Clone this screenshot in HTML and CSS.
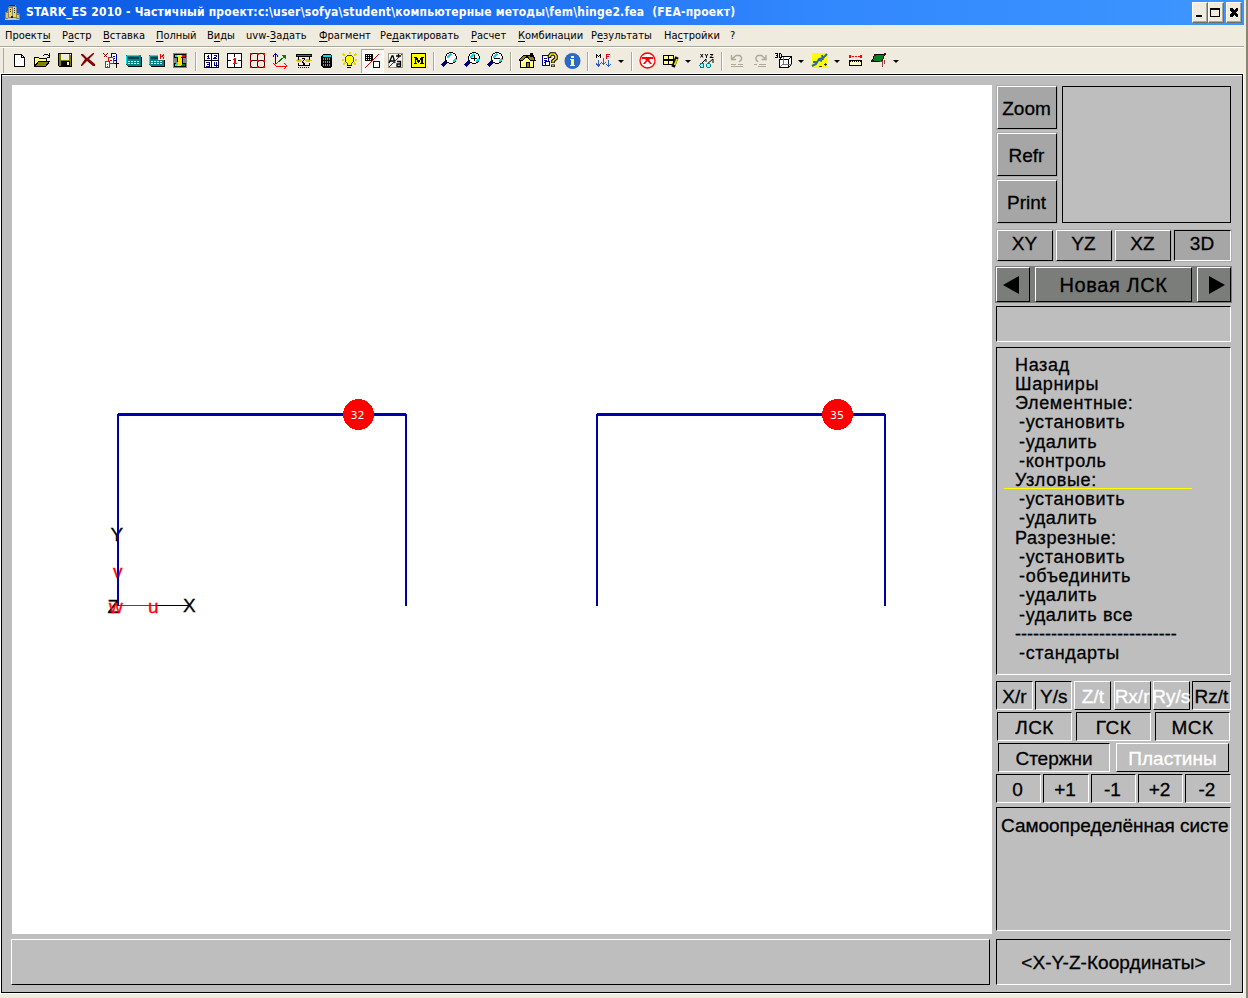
FILE: index.html
```html
<!DOCTYPE html>
<html lang="ru">
<head>
<meta charset="utf-8">
<title>STARK_ES 2010</title>
<link rel="stylesheet" href="styles.css">
</head>
<body>
<div class="window">
  <header class="titlebar">
    <svg class="app-icon" viewBox="0 0 17 17"><path d="M4 3h1V1h7v2h1v6l3 1v6H1V8l3-1z" fill="#84827c"/><path d="M5 4h3v9H5zM9 3h3v10H9z" fill="#f0dc40"/><path d="M5 1h6v1H5zM10 4h1v1h-1zM10 6h1v1h-1zM10 8h1v1h-1zM6 5h1v1H6zM6 7h1v1H6zM7 12h2v2H7z" fill="#222"/><path d="M2 9h2v5H2zM13 11h2v3h-2z" fill="#d8c850"/><path d="M1 15h14v1H1zM4 14h8v1H4z" fill="#c8c8c0"/></svg>
    <span class="title">STARK_ES 2010 - Частичный проект:c:\user\sofya\student\компьютерные методы\fem\hinge2.fea&nbsp; (FEA-проект)</span>
    <div class="controls">
      <span class="control"><svg viewBox="0 0 14 18"><path d="M3 12h6v2H3z"/></svg></span>
      <span class="control"><svg viewBox="0 0 14 18"><path d="M1 5h10v9H1zM2 7v6h8V7z" fill-rule="evenodd"/></svg></span>
      <span class="control close"><svg viewBox="0 0 14 18"><path d="M3 5h2l2 2 2-2h2v2L9 9.500l2 2V14H9l-2-2-2 2H3v-2.500l2-2L3 7z"/></svg></span>
    </div>
  </header>
  <nav class="menu">
    <span>Проект<u>ы</u></span><span>Р<u>а</u>стр</span><span><u>В</u>ставка</span><span><u>П</u>олный</span><span>В<u>и</u>ды</span><span>uvw-<u>З</u>адать</span><span><u>Ф</u>рагмент</span><span>Ре<u>д</u>актировать</span><span><u>Р</u>асчет</span><span><u>К</u>омбинации</span><span>Р<u>е</u>зультаты</span><span>На<u>с</u>тройки</span><span>?</span>
  </nav>
  <div class="toolbar">
    <svg class="tool" viewBox="0 0 23 24"><path d="M6.500 5.500h7l3 3v9h-10z" fill="#fff" stroke="#000"/><path d="M13.500 5.500v3h3" fill="none" stroke="#000"/></svg>
    <svg class="tool" viewBox="0 0 23 24"><path d="M3.500 17.500v-9h4l1 1h7v3" fill="#ffff80" stroke="#000"/><path d="M3.500 17.500l4-5h11l-4 5z" fill="#848400" stroke="#000"/><path d="M12 7l2-2h2l2 2M18.500 4v4h-3" fill="none" stroke="#000"/></svg>
    <svg class="tool" viewBox="0 0 23 24"><path d="M4.500 4.500h13v13h-12l-1-1z" fill="#7b7d00" stroke="#000"/><path d="M7 5h8v6H7z" fill="#efebde"/><path d="M7 12h9v5H7z"/><path d="M13 13h2v3h-2zM16 5h1v1h-1z" fill="#efebde"/></svg>
    <svg class="tool smooth" viewBox="0 0 23 24"><path d="M4 5h2l4 4 6-5h1v1l-5 5 6 5v2h-2l-6-5-5 5H4v-1l4-6-4-4z" fill="#840000"/></svg>
    <svg class="tool" viewBox="0 0 23 24"><path d="M3.500 4.500l4 4m0-4l-4 4" stroke="#840000"/><path d="M11.500 4.500h4l1 1v6h-5z" fill="#fff" stroke="#00008c"/><path d="M13 7h2M13 9h2" stroke="#00008c"/><path d="M8.500 8.500h4l1 1v5h-5z" fill="#fff" stroke="red"/><path d="M10 11h2" stroke="red"/><path d="M5.500 12.500h4v6h-4z" fill="#fff" stroke="#008400"/><path d="M7 15h1M7 17h1" stroke="#008400"/><path d="M16.500 12v7M14 14.500h5" stroke="#000"/></svg>
    <svg class="tool" viewBox="0 0 23 24"><path d="M5 8h14v10H5z"/><path d="M3 6h14l1 1v10H4l-1-1z" fill="#008284"/><path d="M4 6h12v1H4zM3 7h1v8H3z" fill="#00e8ec"/><path d="M5 8h11v2H5z" fill="#063f48"/><path d="M5 12.500h11M5 14.500h11" stroke="#fff" stroke-dasharray="2 1"/></svg>
    <svg class="tool" viewBox="0 0 23 24"><path d="M5 8h14v10H5z"/><path d="M3 6h14l1 1v10H4l-1-1z" fill="#008284"/><path d="M4 6h12v1H4zM3 7h1v8H3z" fill="#00e8ec"/><path d="M5 8h8v2H5z" fill="#063f48"/><path d="M5 12.500h11M5 14.500h11" stroke="#fff" stroke-dasharray="2 1"/><path d="M12 4h8v7h-8z" fill="#efebde"/><path d="M14 5h1v2h1V6h1V5h1v2h-1v1h1v2h-1V8h-2v2h-1z" fill="red"/></svg>
    <svg class="tool" viewBox="0 0 23 24"><path d="M4 4h14v15H4z" fill="#848284"/><path d="M5 5h12v4h-3v5h3v4H5v-4h3V9H5z"/><path d="M6 6h3v2h1v7H9v2H6v-2l3-2V8H6z" fill="#00e0e0"/><path d="M8 6h5l-2 9H9V9z" fill="#fff000"/><path d="M13 6h3v2h-3z" fill="red"/><path d="M11 9h2v6l-2 2H8z" fill="#ffe000"/><path d="M13 15h3v2h-4z" fill="#008000"/></svg>
    <i class="sep"></i>
    <svg class="tool" viewBox="0 0 23 24"><path d="M4.500 4.500h14v14h-14zM11.500 4v15M4 11.500h15" fill="#fff" stroke="#000"/><path d="M8.500 6v4M7 7.500h1M7 9.500h3M14 6.500h2.500v1L14 9.500h3M6 13.500h3v2H7m2 0v2H6M14.500 13v3h3M16.500 13v5" fill="none" stroke="#00008c"/></svg>
    <svg class="tool" viewBox="0 0 23 24"><path d="M4.500 4.500h14v14h-14zM11.500 4v4M11.500 15v4M4 11.500h4M15 11.500h4" fill="#fff" stroke="#000"/><path d="M11 9h2v5h1v1h-4v-1h1v-3h-1v-1h1z" fill="red"/></svg>
    <svg class="tool" viewBox="0 0 23 24"><path d="M4.500 4.500h14v14h-14zM11.500 4v15M4 11.500h15" fill="none" stroke="#400"/><path d="M4 4h2v2H4zM11 4h2v2h-2zM17 4h2v2h-2zM4 11h2v2H4zM11 11h2v2h-2zM17 11h2v2h-2zM4 17h2v2H4zM11 17h2v2h-2zM17 17h2v2h-2z" fill="red"/></svg>
    <svg class="tool" viewBox="0 0 23 24"><path d="M6.500 15V4M4 7.500l2.500-3L9 7.500" fill="none" stroke="#00009c"/><path d="M7 15l9-8" stroke="#008000"/><path d="M12 6h5v5z" fill="#008000"/><path d="M5 15l2 2h11M15 14l3 3-3 3M4 14l4 4" fill="none" stroke="red"/></svg>
    <svg class="tool" viewBox="0 0 23 24"><path d="M4 5h16v3H4z"/><path d="M5 6h14v1H5z" fill="#00a020"/><path d="M4 11h6v1H4zM5 10h4v3H5zM13 11h7v1h-7zM14 10h4v3h-4z" fill="#d8c400"/><path d="M6 8v3M17 8v3M10 9l3 1-3 3 3 2-2 1M6 14v3M17 14v3M6 16.500h12" fill="none" stroke="#000"/><path d="M6 18.500h12" stroke="#00009c" stroke-dasharray="1 1"/></svg>
    <svg class="tool" viewBox="0 0 23 24"><path d="M8 5h7l2 2v10l-2 2H8l-2-2V7z"/><path d="M8 6h7l1 1-1 1H8L7 7z" fill="#00e0e0"/><path d="M8 10h8M8 13h8M8 16h8" stroke="#00c8cc" stroke-width="2" stroke-dasharray="1 1"/></svg>
    <svg class="tool" viewBox="0 0 23 24"><path d="M11.500 3v2M5 5l2 2M18 5l-2 2M4 10.500h2M17 10.500h2M5 16l2-2M18 16l-2-2" stroke="#e4d800" stroke-width="2"/><path d="M9.500 6.500h4l2 2v4l-2 2v2h-4v-2l-2-2v-4z" fill="#ff0" stroke="#4c4c00"/><path d="M9 16.500h5M9 18.500h4" stroke="#000"/></svg>
    <svg class="tool pressed" viewBox="0 0 23 24"><path d="M4 5h8v7H4z"/><path d="M5 6.500h6M5 8.500h6M5 10.500h6" stroke="#fff" stroke-dasharray="1 1"/><path d="M4 19L18 5" stroke="#c00000"/><path d="M12.500 12.500h6v6h-6z" fill="#fff" stroke="#00008c"/></svg>
    <svg class="tool" viewBox="0 0 23 24"><path d="M4.500 4.500h14v14h-14z" fill="#f7f5ee" stroke="#9a9890"/><g class="soft"><path d="M5 14l3-7h1l2 7M6 12h4M12 7h5M14.500 5v4" stroke="#000" stroke-width="1.300" fill="none"/><path d="M13 12.500h3.500v5H13v-2.500h3" fill="none" stroke="#000" stroke-width="1.300"/></g><path d="M5 18L18 5" stroke="#c00000"/></svg>
    <svg class="tool" viewBox="0 0 23 24"><path d="M4.500 4.500h14v14h-14z" fill="#ff0" stroke="#000"/><path d="M7 8h3l2 4 2-4h3v1h-1v5h1v1h-4v-1h1v-4l-2 4h-1l-2-4v4h1v1H7v-1h1V9H7z"/></svg>
    <i class="sep"></i>
    <svg class="tool" viewBox="0 0 23 24"><path d="M9 12l-5 5" stroke="#000084" stroke-width="3"/><circle cx="13" cy="9" r="5.500" fill="#fff" stroke="#000"/><path d="M9 9l4-4M15 13l3-3" stroke="#00dce0" stroke-width="2"/></svg>
    <svg class="tool" viewBox="0 0 23 24"><path d="M9 12l-5 5" stroke="#000084" stroke-width="3"/><circle cx="13" cy="9" r="5.500" fill="#fff" stroke="#000"/><path d="M9 9l4-4M15 13l3-3" stroke="#00dce0" stroke-width="2"/><path d="M10 9.500h6M13.500 6v6" stroke="#000"/></svg>
    <svg class="tool" viewBox="0 0 23 24"><path d="M9 12l-5 5" stroke="#000084" stroke-width="3"/><circle cx="13" cy="9" r="5.500" fill="#fff" stroke="#000"/><path d="M9 9l4-4M15 13l3-3" stroke="#00dce0" stroke-width="2"/><path d="M10 9.500h6" stroke="#000"/></svg>
    <i class="sep"></i>
    <svg class="tool" viewBox="0 0 23 24"><path d="M5.500 11v7.500h13V11l-5-4z" fill="#ffff80" stroke="#000"/><path d="M4 11l5-5h9l2 5h-5l-3-4-5 5z" fill="#8c8400" stroke="#000"/><path d="M15 4h3v4h-3z"/><path d="M11.500 13.500h3v5h-3z" fill="#8c8400" stroke="#000"/></svg>
    <svg class="tool" viewBox="0 0 23 24"><path d="M4.500 6.500h6v10h-6zM6 9.500h3M6 11.500h3M6 13.500h3" fill="#fff" stroke="#000080"/><path d="M7.500 12.500h4v4h-4z" fill="#fff" stroke="#000080"/><g class="soft"><path d="M11.500 9V7l1.500-2h3.500l1.500 2v2.500L15 12v2M15 15.500V18" fill="none" stroke="#000" stroke-width="3.600"/><path d="M11.500 8V7l1.500-2h3.500l1.500 2v2.500L15 12v1.500M15 16v1.500" fill="none" stroke="#ffe800" stroke-width="1.600"/></g></svg>
    <svg class="tool smooth" viewBox="0 0 23 24"><circle cx="11.500" cy="12" r="8" fill="#2c68c8"/><path d="M10 7h3v2h-3zM9 10h4v6h1v1H9v-1h1v-5H9z" fill="#ffff70"/></svg>
    <i class="sep"></i>
    <svg class="tool" viewBox="0 0 23 24"><path d="M4 5h1v1h1v1h1V6h1V5h1v4H8V7H7v1H6V7H5v2H4z"/><path d="M14 5h4v1h-3v1h2v1h-2v2h-1z" fill="red"/><path d="M6.500 11v6M4 14.500l2.500 2.500 2-2.500M11.500 9v6M9 13l2.500 2.500L14 13M16.500 11v6M14 15l2.500 2.500L19 15" fill="none" stroke="#2860c8"/></svg>
    <i class="drop"></i><i class="sep"></i>
    <svg class="tool smooth" viewBox="0 0 23 24"><circle cx="11.500" cy="11.500" r="7.500" fill="#fff" stroke="red" stroke-width="1.300"/><path d="M6 8h11v2h-3l-1 1 3 4h-2l-2.500-3L9 15H7l3-4-1-1H6z" fill="red"/></svg>
    <svg class="tool" viewBox="0 0 23 24"><path d="M4 6h11v10H4z"/><path d="M5 7h4v3H5zM10 7h4v3h-4zM5 12h4v3H5zM10 12h4v3h-4z" fill="#ffff8c"/><g class="soft"><path d="M18 8l-4 10" stroke="#000" stroke-width="3.500"/><path d="M18 10l-2.500 6" stroke="#e8d800" stroke-width="1.800"/></g></svg>
    <i class="drop"></i>
    <svg class="tool" viewBox="0 0 23 24"><g class="soft" fill="none" stroke="#000"><path d="M5.500 5l2.500 3.500M8 5L5.500 8.500M10 5l1.500 2L13 5m-1.500 2v2M15 5.500h3l-3 3h3.500M6 15l5-5v3M12 15l6-5v4"/></g><circle cx="7" cy="16.500" r="2" fill="#8ff" stroke="#008284"/><circle cx="13.500" cy="16.500" r="2" fill="#8ff" stroke="#008284"/></svg>
    <i class="sep"></i>
    <svg class="tool" viewBox="0 0 23 24"><g class="soft"><path d="M5.500 6v4.500H10M6 10l4-3.500h4l1.500 2v2L13 13" fill="none" stroke="#aca899" stroke-width="1.400"/></g><path d="M5 15.500h5M5 17.500h12M12 15.500h5" stroke="#aca899"/></svg>
    <svg class="tool" viewBox="0 0 23 24"><g class="soft"><path d="M17 6v4.500h-4.500M16.500 10l-4-3.500h-4L7 8.500v2L9 13" fill="none" stroke="#aca899" stroke-width="1.400"/></g><path d="M5 15.500h3M9 17.500h8M10 15.500h7" stroke="#aca899"/></svg>
    <svg class="tool" viewBox="0 0 23 24"><path d="M3 4h3v5H3V8h2V7H4V6h1V5H3zM7 4h2v1h1v3H9v1H7zM8 5v3h1V5z" fill-rule="evenodd"/><path d="M7.500 10.500l3-3h9v8l-3 3h-9zM7.500 10.500h9v8M16.500 10.500l3-3" fill="#fff" stroke="#000"/><path d="M11.500 8v7h8M8 18l3-3" stroke="#777" fill="none"/></svg>
    <i class="drop"></i>
    <svg class="tool" viewBox="0 0 23 24"><path d="M4 4h16v15H4z" fill="#ff0"/><g class="soft"><path d="M4 17l4-2 3-5 4-1 4-4M5 13h4M10 10.500l4 1.500M14 6l1 5" fill="none" stroke="#2868b0" stroke-width="2"/></g><path d="M11 17.500h3M16 15.500h3M17.500 14v3" stroke="#333"/></svg>
    <i class="drop"></i>
    <svg class="tool" viewBox="0 0 23 24"><path d="M5 6h2v3H5zM16 6h2v3h-2z" fill="red"/><path d="M5 7.500h13" stroke="red" stroke-dasharray="2 1"/><path d="M5.500 11.500h12v5h-12z" fill="#ffffc0" stroke="#000"/><path d="M6 12.500h11" stroke="#000" stroke-dasharray="1 1"/></svg>
    <svg class="tool" viewBox="0 0 23 24"><path d="M8 5h10l-3 7H5z" fill="#008020" stroke="#000"/><path d="M7 5h2v2H7zM17 4h2v2h-2zM4 11h3v2H4zM14 11h2v2h-2z" fill="#600"/><path d="M13 12.500h2.500v5M17.500 11v4" stroke="#a04040" fill="none"/></svg>
    <i class="drop"></i>
  </div>
  <div class="workspace">
    <div class="left">
      <svg class="canvas" viewBox="12 85 980 849">
        <path d="M119 605.500H155" stroke="red"/><path d="M155 605.500H189" stroke="#000"/>
        <g class="axis"><text x="110.500" y="541">Y</text><text x="183" y="612">X</text><text x="107.500" y="613">Z</text></g>
        <g class="local"><text x="113" y="578">v</text><text x="109" y="613">w</text><text x="148" y="613">u</text></g>
        <g class="frame"><path d="M118 414.500H406M597 414.500H885" stroke-width="3"/><path d="M118 414V606M406 414V606M597 414V606M885 414V606" stroke-width="2"/></g>
        <circle cx="358.500" cy="414.500" r="15.500"/><circle cx="837.500" cy="414.500" r="15.500"/>
        <g class="node"><text x="357.500" y="419">32</text><text x="837" y="419">35</text></g>
      </svg>
      <div class="status"></div>
    </div>
    <aside class="panel">
      <div class="top">
        <div class="actions"><button>Zoom</button><button>Refr</button><button>Print</button></div>
        <div class="preview"></div>
      </div>
      <div class="views"><button>XY</button><button>YZ</button><button>XZ</button><button class="on">3D</button></div>
      <div class="lcs">
        <button><svg viewBox="0 0 16 18"><path d="M0 9L16 0v18z"/></svg></button>
        <button class="name">Новая ЛСК</button>
        <button><svg viewBox="0 0 16 18"><path d="M16 9L0 0v18z"/></svg></button>
      </div>
      <div class="sunk field"></div>
      <ul class="sunk commands">
        <li>Назад</li><li>Шарниры</li><li>Элементные:</li><li class="sub">-установить</li><li class="sub">-удалить</li><li class="sub">-контроль</li><li class="current">Узловые:</li><li class="sub">-установить</li><li class="sub">-удалить</li><li>Разрезные:</li><li class="sub">-установить</li><li class="sub">-объединить</li><li class="sub">-удалить</li><li class="sub">-удалить все</li><li class="rule">---------------------------</li><li class="sub">-стандарты</li>
      </ul>
      <div class="row dof"><span class="sunk">X/r</span><span class="sunk">Y/s</span><span class="raised">Z/t</span><span class="raised">Rx/r</span><span class="raised">Ry/s</span><span class="sunk">Rz/t</span></div>
      <div class="row cs"><span class="sunk">ЛСК</span><span class="sunk">ГСК</span><span class="sunk">МСК</span></div>
      <div class="row kind"><span class="sunk">Стержни</span><span class="raised">Пластины</span></div>
      <div class="row step"><span class="sunk">0</span><span class="sunk">+1</span><span class="sunk">-1</span><span class="sunk">+2</span><span class="sunk">-2</span></div>
      <div class="sunk message">Самоопределённая систе</div>
      <div class="sunk coords">&lt;X-Y-Z-Координаты&gt;</div>
    </aside>
  </div>
</div>
</body>
</html>
```
FILE: styles.css
```css
* { box-sizing: border-box; }
body { margin: 0; background: #efebde; font-family: "Liberation Sans", Arial, sans-serif; color: #000; }
.window { width: 1248px; height: 998px; overflow: hidden; display: flex; flex-direction: column; padding-right: 2px; border-right: 2px solid #8a8473; background: #efebde; }
.titlebar { height: 25px; display: flex; align-items: center; padding: 0 2px 0 4px; background: linear-gradient(90deg, #0b5be2, #1a6cf0 35%, #3187fd 65%, #3d96ff); }
.app-icon { width: 17px; height: 17px; margin-right: 5px; shape-rendering: crispEdges; }
.title { flex: 1; color: #fff; font: bold 12px/25px "DejaVu Sans Condensed", "DejaVu Sans", sans-serif; letter-spacing: .19px; white-space: pre; }
.controls { display: flex; height: 21px; }
.control { width: 16px; height: 21px; background: #efebde; border: 1px solid; border-color: #fff #716f64 #716f64 #fff; box-shadow: inset -1px -1px #aca899; }
.control.close { margin-left: 2px; }
.control svg { display: block; width: 14px; height: 18px; shape-rendering: crispEdges; }
.menu { height: 23px; display: grid; grid-template-columns: 57px 41px 53px 51px 39px 73px 61px 91px 47px 73px 73px 66px 20px; padding-left: 5px; font: 11px/21px "DejaVu Sans Condensed", "DejaVu Sans", sans-serif; border-bottom: 1px solid #fff; box-shadow: inset 0 -1px #aca899; white-space: nowrap; }
.menu u { text-underline-offset: 2px; }
.toolbar { height: 26px; display: flex; align-items: center; padding-left: 8px; box-shadow: inset 3px 0 #efebde, inset 4px 0 #aca899; }
.tool { width: 23px; height: 24px; flex: none; shape-rendering: crispEdges; }
.tool.smooth, .soft { shape-rendering: auto; }
.tool.pressed { background: #f8f6f0; box-shadow: inset 1px 1px #aca899, inset -1px -1px #fff; }
.sep { width: 8px; height: 19px; background: linear-gradient(90deg, transparent 3px, #aca899 3px, #aca899 4px, #fff 4px, #fff 5px, transparent 5px); }
.drop { width: 13px; height: 24px; display: flex; align-items: center; }
.drop::after { content: ""; margin: 1px 0 0 3px; border: 3px solid transparent; border-top-color: #000; border-bottom: 0; }
.workspace { margin-left: 1px; width: 1242px; height: 919px; flex: none; border: 1px solid #000; background: #bebebe; box-shadow: inset 0 1px #fff, 0 0 0 1px #fff; display: flex; padding: 10px 11px 7px 9px; }
.left { width: 981px; display: flex; flex-direction: column; gap: 5px; }
.canvas { width: 980px; height: 849px; margin-left: 1px; background: #fff; shape-rendering: crispEdges; }
.frame { stroke: #0000a8; fill: none; }
.axis, .local { font-size: 19px; stroke: #000; stroke-width: .3px; }
.local { fill: red; stroke: red; }
.canvas circle { fill: red; }
.node { fill: #fff; font: 11px "DejaVu Sans", sans-serif; text-anchor: middle; }
.status { width: 979px; height: 46px; border: 1px solid; border-color: #fff #000 #000 #fff; }
.panel { width: 237px; margin-left: 3px; display: flex; flex-direction: column; font-size: 19px; letter-spacing: 0; -webkit-text-stroke: .3px; }
.panel button { font: inherit; letter-spacing: inherit; color: #000; padding: 2px 1px 0 0; border: 1px solid; border-color: #fff #000 #000 #fff; border-radius: 0; display: flex; align-items: center; justify-content: center; }
.top { display: flex; gap: 4px; }
.actions { width: 63px; display: flex; flex-direction: column; gap: 2px; }
.actions button, .views button { background: #a6a6a6; }
.actions button { width: 60px; height: 43px; margin: 1px; margin-left: 2px; outline: 1px solid #acacac; }
.preview { width: 169px; height: 137px; border: 1px solid #000; margin: 1px 0 0; }
.views { display: flex; justify-content: space-between; margin: 6px 1px 0 2px; }
.panel .views button { width: 56px; height: 31px; outline: 1px solid #adadad; padding: 0 1px 4px 0; }
.panel .views .on { width: 57px; border-color: #000 #fff #fff #000; }
.lcs { margin-top: 5px; height: 37px; padding: 1px; display: flex; justify-content: space-between; background: #7b7d7a; }
.panel .lcs button { width: 34px; height: 35px; padding: 0; background: #7b7d7a; }
.panel .lcs .name { width: 157px; font-size: 20px; padding-top: 2px; letter-spacing: .6px; }
.lcs svg { width: 16px; height: 18px; }
.lcs button:last-child svg { margin-left: 5px; }
.lcs button:first-child svg { margin-right: 4px; }
.sunk { border: 1px solid; border-color: #000 #fff #fff #000; }
.raised { border: 1px solid; border-color: #fff #000 #000 #fff; color: #fff; }
.field, .commands, .message, .coords { width: 235px; margin-left: 1px; }
.field { height: 36px; margin-top: 3px; }
.commands { height: 328px; margin-top: 5px; margin-bottom: 0; padding: 7.600px 0 0 18px; list-style: none; font-size: 18px; line-height: 19.240px; letter-spacing: .65px; }
.sub { padding-left: 4px; }
.rule { letter-spacing: 0; }
.current { width: 188px; height: 18px; margin-left: -11px; margin-bottom: 1.240px; padding-left: 11px; border-bottom: 1px solid #ff0; }
.row { height: 29px; display: grid; column-gap: 3px; margin: 2px 1px 0; }
.row span { display: flex; align-items: center; justify-content: center; white-space: nowrap; padding-top: 2px; }
.dof { grid-template-columns: 37px 37px 37px 37px 37px 39px; column-gap: 2.200px; margin-top: 6px; }
.cs { grid-template-columns: 75px 75px 75px; column-gap: 4px; margin-left: 2px; letter-spacing: .4px; }
.kind { grid-template-columns: 112px 113px; column-gap: 6px; margin-left: 3px; }
.step { grid-template-columns: 45px 46px 45px 45px 46px; column-gap: 2px; }
.step span { padding-right: 2px; }
.message { height: 124px; margin-top: 4px; padding: 7px 0 0 4px; white-space: nowrap; letter-spacing: -.03px; }
.coords { height: 46px; margin-top: 8px; padding-top: 2px; display: flex; align-items: center; justify-content: center; letter-spacing: .05px; }
```
